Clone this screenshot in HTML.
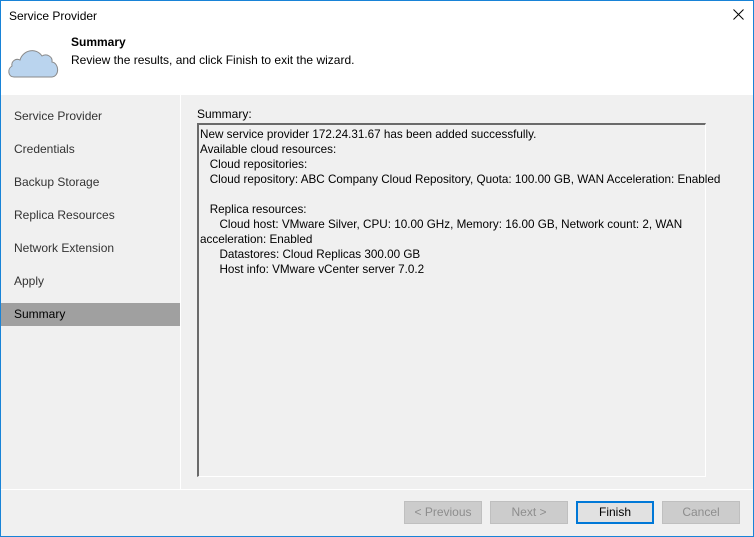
<!DOCTYPE html>
<html><head><meta charset="utf-8"><style>
*{margin:0;padding:0;box-sizing:border-box}
body{width:754px;height:537px;overflow:hidden;font-family:"Liberation Sans",sans-serif;font-size:12px;color:#000;background:#f0f0f0;position:relative}
.win{position:absolute;left:0;top:0;width:754px;height:537px;border:1px solid #1883d7;background:#f0f0f0}
.in{position:absolute;left:-1px;top:0px;width:754px;height:536px}
.hdr{position:absolute;left:1px;top:0px;width:752px;height:94px;background:#fff}
.t{position:absolute;white-space:nowrap}
.nav{position:absolute;left:1px;top:94px;width:180px;height:394px;border-right:1px solid #fff}
.nav div{position:absolute;left:0;width:179px;height:23px;padding-left:13px;line-height:23px;color:#333}
.box{position:absolute;left:197px;top:122px;width:509px;height:354px;border-top:2px solid #6a6a6a;border-left:2px solid #6a6a6a;border-right:1px solid #fff;border-bottom:1px solid #fff;background:#f0f0f0;font-size:11.7px;line-height:15px;padding:2px 0 0 1px}
.box div{white-space:nowrap;height:15px}
.sep{position:absolute;left:1px;top:488px;width:752px;height:1px;background:#fff}
.btn{position:absolute;top:500px;width:78px;height:23px;background:#cccccc;border:1px solid #bfbfbf;color:#8d8d8d;text-align:center;line-height:21px}
</style></head><body>
<div class="win"><div class="in">
<div class="hdr">
<div class="t" style="left:8px;top:8px">Service Provider</div>
<svg style="position:absolute;left:732px;top:8px" width="11" height="11" viewBox="0 0 11 11"><path d="M0.5 0.5L10.5 10.5M10.5 0.5L0.5 10.5" stroke="#000" stroke-width="1"/></svg>
<svg style="position:absolute;left:5px;top:42px" width="54" height="36" viewBox="0 0 54 36"><path d="M8 34 C2 34 1 26 6 23 C5 18 10 15 14 17 C17 7 30 4 36 13 C41 10 47 14 46 19 C53 20 54 33 46 34 Z" fill="#bad4ee" stroke="#8a8a8a" stroke-width="1"/></svg>
<div class="t" style="left:70px;top:34px;font-weight:bold">Summary</div>
<div class="t" style="left:70px;top:52px">Review the results, and click Finish to exit the wizard.</div>
</div>
<div class="nav">
<div style="top:10px">Service Provider</div>
<div style="top:43px">Credentials</div>
<div style="top:76px">Backup Storage</div>
<div style="top:109px">Replica Resources</div>
<div style="top:142px">Network Extension</div>
<div style="top:175px">Apply</div>
<div style="top:208px;background:#a0a0a0;color:#000">Summary</div>
</div>
<div class="t" style="left:197px;top:106px">Summary:</div>
<div class="box">
<div>New service provider 172.24.31.67 has been added successfully.</div>
<div>Available cloud resources:</div>
<div>&nbsp;&nbsp;&nbsp;Cloud repositories:</div>
<div>&nbsp;&nbsp;&nbsp;Cloud repository: ABC Company Cloud Repository, Quota: 100.00 GB, WAN Acceleration: Enabled</div>
<div></div>
<div>&nbsp;&nbsp;&nbsp;Replica resources:</div>
<div>&nbsp;&nbsp;&nbsp;&nbsp;&nbsp;&nbsp;Cloud host: VMware Silver, CPU: 10.00 GHz, Memory: 16.00 GB, Network count: 2, WAN</div>
<div>acceleration: Enabled</div>
<div>&nbsp;&nbsp;&nbsp;&nbsp;&nbsp;&nbsp;Datastores: Cloud Replicas 300.00 GB</div>
<div>&nbsp;&nbsp;&nbsp;&nbsp;&nbsp;&nbsp;Host info: VMware vCenter server 7.0.2</div>
</div>
<div class="sep"></div>
<div class="btn" style="left:404px">&lt; Previous</div>
<div class="btn" style="left:490px">Next &gt;</div>
<div class="btn" style="left:576px;background:#e1e1e1;border:2px solid #0078d7;color:#000;line-height:19px">Finish</div>
<div class="btn" style="left:662px">Cancel</div>
</div></div>
</body></html>
